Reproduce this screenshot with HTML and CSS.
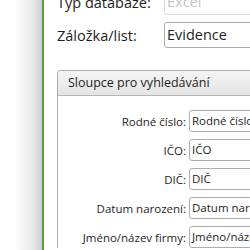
FILE: index.html
```html
<!DOCTYPE html>
<html>
<head>
<meta charset="utf-8">
<link rel="stylesheet" href="styles.css">
</head>
<body>
<div class="page">
  <div class="sidebar"></div>
  <div class="main">
    <div class="form">
      <div class="row">
        <label class="label">Typ databáze:</label>
        <div class="input disabled">Excel</div>
      </div>
      <div class="row">
        <label class="label">Záložka/list:</label>
        <div class="input">Evidence</div>
      </div>
    </div>
    <div class="group">
      <div class="group-header">Sloupce pro vyhledávání</div>
      <div class="group-body">
        <div class="grow"><span class="glabel">Rodné číslo:</span><div class="ginput">Rodné číslo</div></div>
        <div class="grow"><span class="glabel">IČO:</span><div class="ginput">IČO</div></div>
        <div class="grow"><span class="glabel">DIČ:</span><div class="ginput">DIČ</div></div>
        <div class="grow"><span class="glabel">Datum narození:</span><div class="ginput">Datum narození</div></div>
        <div class="grow"><span class="glabel">Jméno/název firmy:</span><div class="ginput">Jméno/název firmy</div></div>
      </div>
    </div>
  </div>
</div>
</body>
</html>
```
FILE: styles.css
```css
html, body {
  margin: 0;
  padding: 0;
  width: 250px;
  height: 250px;
  overflow: hidden;
  background: #fff;
}
.page {
  display: flex;
  height: 250px;
  font-family: "Open Sans", "Noto Sans", sans-serif;
  color: #1e1e1e;
}
.sidebar {
  width: 42px;
  flex: none;
  background: linear-gradient(to right, #ffffff 35%, #e6e6e6 80%, #cfcfcf);
  border-right: 2px solid #5a9c45;
}
.main {
  flex: none;
  width: 400px;
  padding-left: 13px;
}
.form {
  margin-top: -11px;
  display: flex;
  flex-direction: column;
  gap: 7px;
}
.row {
  display: flex;
  align-items: center;
}
.label {
  width: 107px;
  font-size: 14.5px;
}
.input {
  width: 200px;
  height: 24px;
  border: 1px solid #abadb3;
  border-radius: 3px;
  font-size: 14.5px;
  line-height: 24px;
  padding-left: 2px;
  box-sizing: content-box;
}
.input.disabled {
  border-color: #dadada;
  color: #c6c6c6;
}
.group {
  margin-top: 22px;
  border: 1px solid #aaaab4;
  border-right: none;
  border-bottom: none;
  border-top-left-radius: 4px;
}
.group-header {
  height: 24px;
  line-height: 24px;
  padding-left: 10px;
  font-size: 12.5px;
  background: linear-gradient(to bottom, #f5f5f5, #e4e4e4);
  border-bottom: 1px solid #b5b5b5;
  border-top-left-radius: 3px;
}
.group-body {
  padding-top: 14px;
  display: flex;
  flex-direction: column;
  gap: 7px;
}
.grow {
  display: flex;
  align-items: center;
}
.glabel {
  width: 128px;
  text-align: right;
  font-size: 11.5px;
  padding-right: 3px;
  white-space: nowrap;
}
.ginput {
  width: 150px;
  height: 20px;
  line-height: 20px;
  border: 1px solid #abadb3;
  border-radius: 3px;
  font-size: 11.5px;
  padding-left: 2px;
  white-space: nowrap;
}
```
